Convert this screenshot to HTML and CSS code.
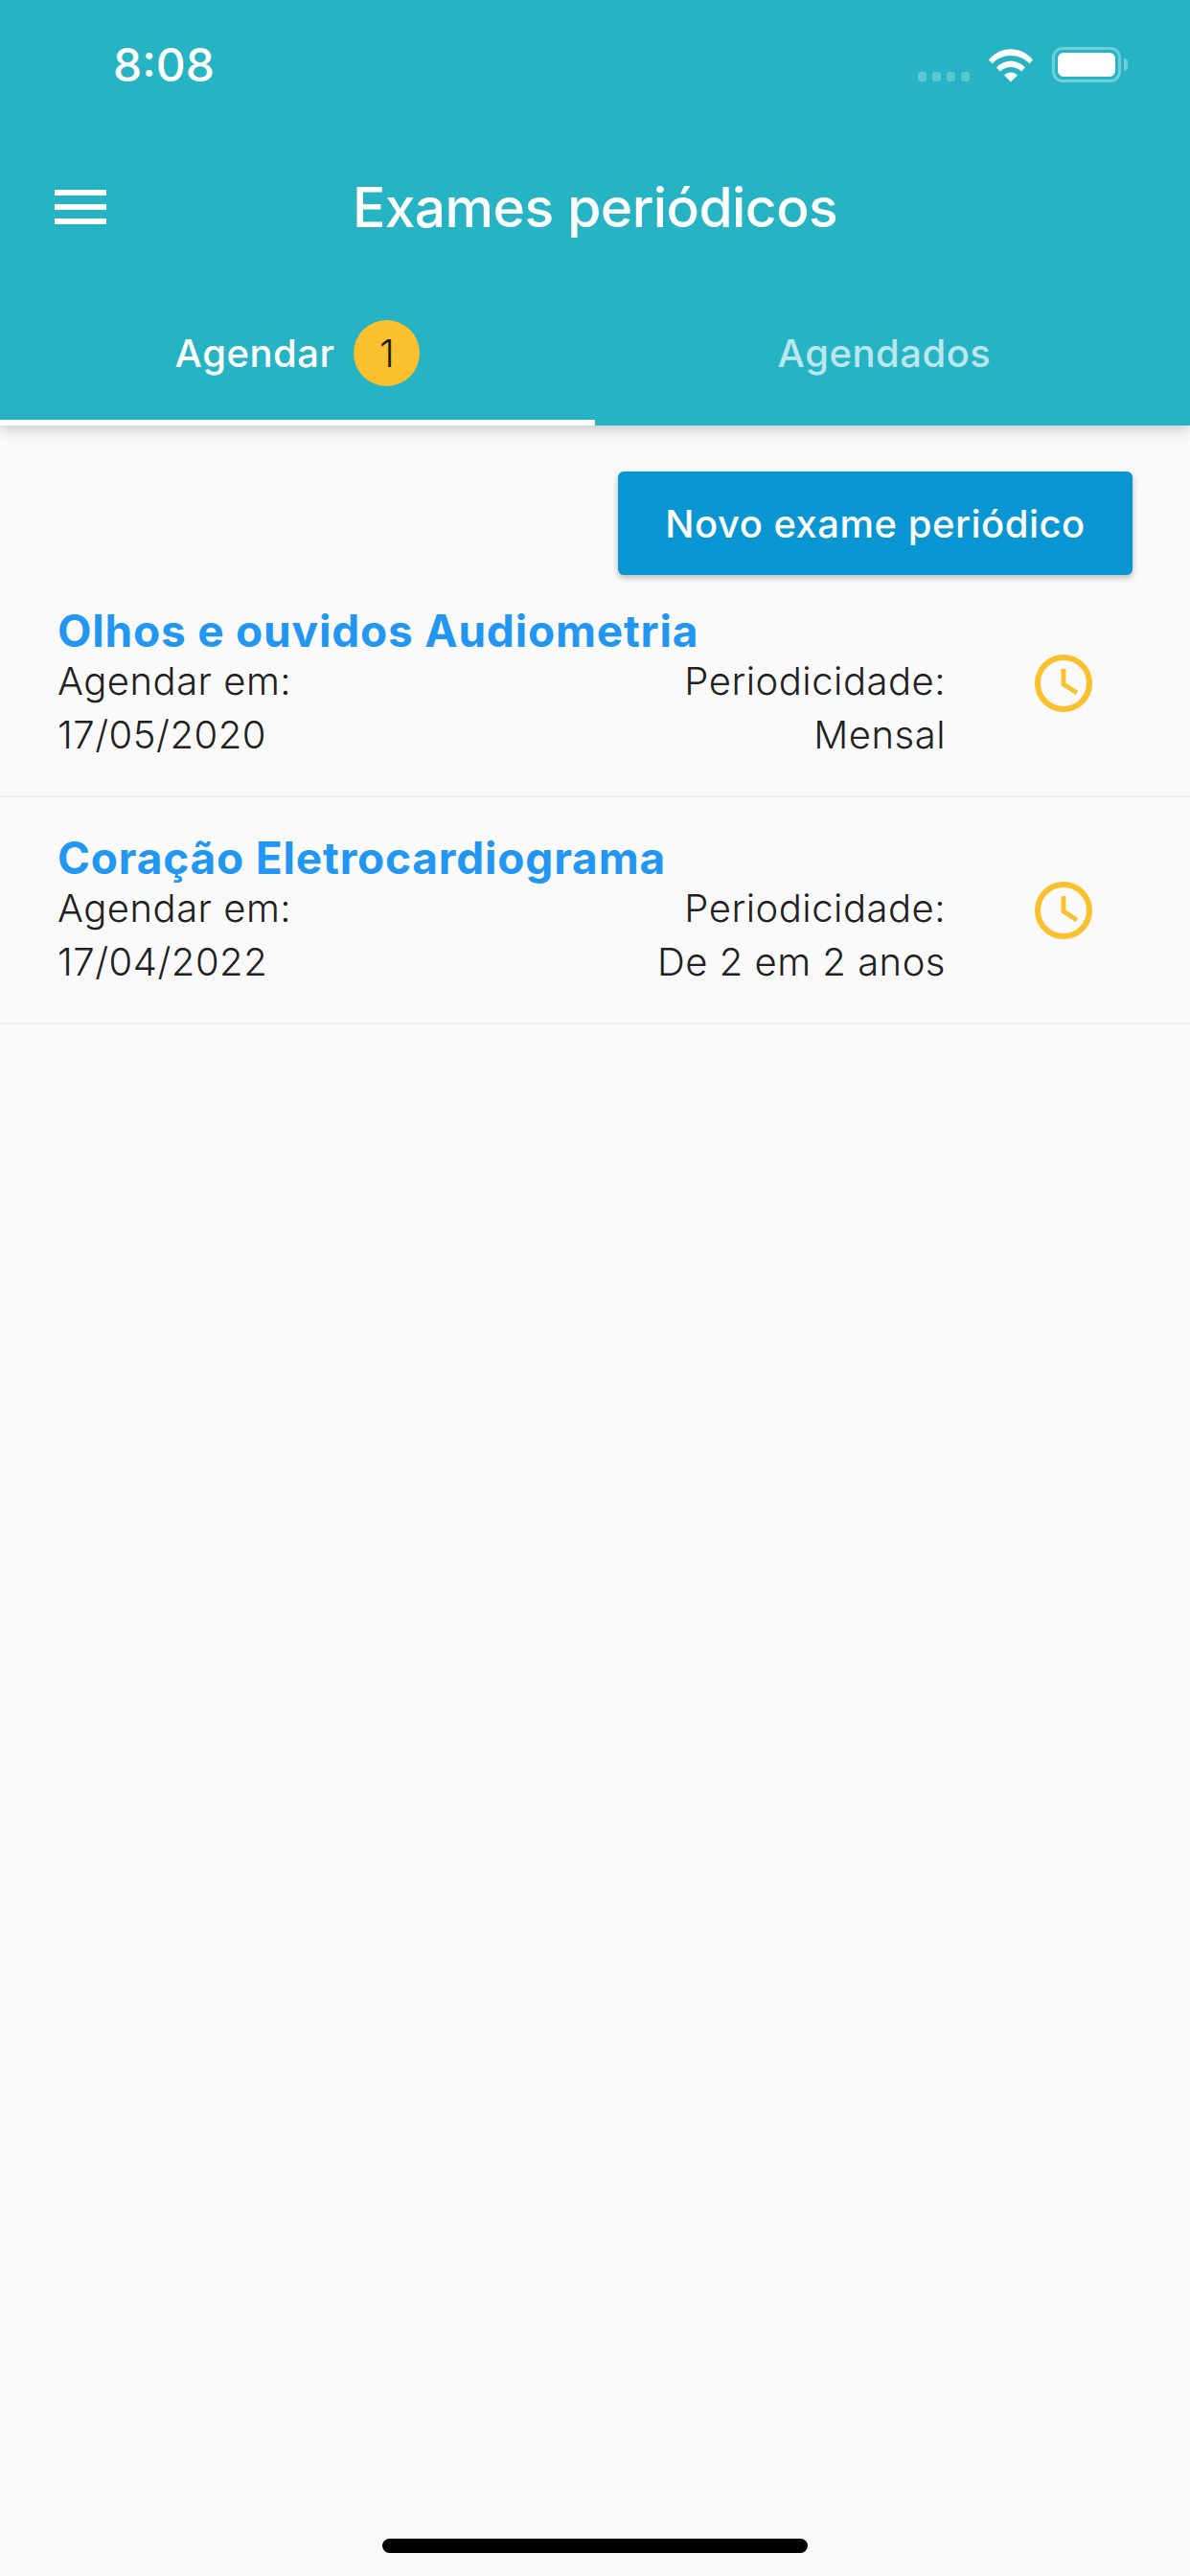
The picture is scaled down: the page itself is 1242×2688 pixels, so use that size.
FILE: index.html
```html
<!DOCTYPE html>
<html lang="pt">
<head>
    <meta charset="UTF-8">
    <meta name="viewport" content="width=device-width, initial-scale=1.0">
    <title>Exames periódicos</title>
    <link rel="stylesheet" href="styles.css">
</head>
<body>

    <header class="header">
        <div class="status">
            <span class="time">8:08</span>
            <div class="status-icons">
                <div class="signal"><i></i><i></i><i></i><i></i></div>
                <svg class="wifi" width="48" height="37" viewBox="0 0 48 37">
                    <path d="M1 13.500C13 -1.500 35 -1.500 47 13.500L43.500 17.500C33 6 15 6 4.500 17.500Z" fill="#fff"/>
                    <path d="M9 21.500C17 12.500 31 12.500 39 21.500L35 25.500C29 19.500 19 19.500 13 25.500Z" fill="#fff"/>
                    <path d="M17 29.500C21 25.500 27 25.500 31 29.500L24 36.500Z" fill="#fff"/>
                </svg>
                <div class="battery"><div class="battery-fill"></div></div>
                <div class="battery-nub"></div>
            </div>
        </div>

        <div class="toolbar">
            <div class="menu"><i></i><i></i><i></i></div>
            <h1>Exames periódicos</h1>
        </div>

        <div class="tabs">
            <div class="tab active">
                <span>Agendar</span>
                <span class="badge">1</span>
            </div>
            <div class="tab">
                <span>Agendados</span>
            </div>
        </div>
    </header>

    <main class="content">
        <div class="actions">
            <button class="new-exam">Novo exame periódico</button>
        </div>

        <div class="exam-list">
            <div class="exam">
                <div class="exam-title">Olhos e ouvidos Audiometria</div>
                <div class="exam-info">
                    <div class="exam-date">
                        <div>Agendar em:</div>
                        <div>17/05/2020</div>
                    </div>
                    <div class="exam-period">
                        <div>Periodicidade:</div>
                        <div>Mensal</div>
                    </div>
                    <svg class="clock" width="60" height="60" viewBox="0 0 60 60">
                        <circle cx="30" cy="30" r="27" fill="none" stroke="#fbc02d" stroke-width="6"/>
                        <path d="M30 15V31L44 40" fill="none" stroke="#fbc02d" stroke-width="5"/>
                    </svg>
                </div>
            </div>

            <div class="exam">
                <div class="exam-title">Coração Eletrocardiograma</div>
                <div class="exam-info">
                    <div class="exam-date">
                        <div>Agendar em:</div>
                        <div>17/04/2022</div>
                    </div>
                    <div class="exam-period">
                        <div>Periodicidade:</div>
                        <div>De 2 em 2 anos</div>
                    </div>
                    <svg class="clock" width="60" height="60" viewBox="0 0 60 60">
                        <circle cx="30" cy="30" r="27" fill="none" stroke="#fbc02d" stroke-width="6"/>
                        <path d="M30 15V31L44 40" fill="none" stroke="#fbc02d" stroke-width="5"/>
                    </svg>
                </div>
            </div>
        </div>
    </main>

    <div class="home-bar"></div>

</body>
</html>
```

FILE: styles.css
```css
* {
    box-sizing: border-box;
}
html, body {
    margin: 0;
    height: 2688px;
}
body {
    font-family: Inter, "Liberation Sans", sans-serif;
    background: #fafafa;
    display: flex;
    flex-direction: column;
    overflow: hidden;
}

/* header */
.header {
    background: #26b4c5;
    height: 444px;
    color: #fff;
    box-shadow: 0 4px 14px rgba(0, 0, 0, 0.2);
    position: relative;
}
.status {
    height: 136px;
    padding: 49px 65px 0 118px;
    display: flex;
    justify-content: space-between;
    align-items: flex-start;
}
.time {
    font-size: 48px;
    font-weight: 500;
    line-height: 37px;
}
.status-icons {
    display: flex;
    align-items: flex-end;
    height: 37px;
}
.signal {
    display: flex;
    gap: 6px;
    margin-right: 19px;
    margin-bottom: 1px;
}
.signal i {
    width: 9px;
    height: 10px;
    border-radius: 3px;
    background: rgba(255, 255, 255, 0.25);
}
.wifi {
    margin-right: 19px;
}
.battery {
    width: 72px;
    height: 37px;
    border: 3px solid rgba(255, 255, 255, 0.35);
    border-radius: 11px;
    padding: 3px;
}
.battery-fill {
    height: 100%;
    background: #fff;
    border-radius: 6px;
}
.battery-nub {
    width: 4px;
    height: 13px;
    margin: 0 0 12px 3px;
    background: rgba(255, 255, 255, 0.35);
    border-radius: 0 4px 4px 0;
}

.toolbar {
    height: 160px;
    display: flex;
    align-items: center;
    justify-content: center;
    position: relative;
}
.toolbar h1 {
    margin: 0;
    font-size: 57px;
    font-weight: 500;
    letter-spacing: -0.6px;
}
.menu {
    position: absolute;
    left: 57px;
    top: 62px;
    width: 54px;
    display: flex;
    flex-direction: column;
    gap: 9px;
}
.menu i {
    height: 6px;
    background: #fff;
}

.tabs {
    height: 148px;
    display: grid;
    grid-template-columns: 1fr 1fr;
}
.tab {
    display: flex;
    align-items: center;
    justify-content: center;
    gap: 20px;
    padding: 3px 17px 6px 0;
    font-size: 40px;
    font-weight: 500;
    letter-spacing: 0.5px;
    color: rgba(255, 255, 255, 0.7);
}
.tab.active {
    padding: 3px 0 0;
    color: #fff;
    border-bottom: 6px solid #fff;
}
.badge {
    width: 69px;
    height: 69px;
    border-radius: 50%;
    background: #fbc02d;
    color: #212121;
    font-weight: 300;
    letter-spacing: 0;
    display: flex;
    align-items: center;
    justify-content: center;
}

/* content */
.content {
    flex: 1;
}
.actions {
    display: flex;
    justify-content: flex-end;
    padding: 48px 60px 0 0;
}
.new-exam {
    width: 537px;
    height: 108px;
    border: none;
    border-radius: 6px;
    background: #0a96d3;
    color: #fff;
    font-family: inherit;
    font-size: 40px;
    font-weight: 500;
    letter-spacing: 0.5px;
    box-shadow: 0 3px 6px rgba(0, 0, 0, 0.25);
}
.exam-list {
    margin-top: -5px;
}
.exam {
    padding: 38px 102px 35px 60px;
    border-bottom: 2px solid #eeeeee;
}
.exam-title {
    color: #2196f3;
    font-size: 46px;
    font-weight: 700;
    line-height: 50px;
    letter-spacing: 0.8px;
}
.exam-info {
    display: flex;
    align-items: flex-start;
    font-size: 40px;
    font-weight: 300;
    letter-spacing: 0.5px;
    line-height: 56px;
    color: #212121;
}
.exam-date {
    flex: 1;
}
.exam-period {
    text-align: right;
    margin-right: 93px;
}

.home-bar {
    position: absolute;
    left: 399px;
    top: 2649px;
    width: 444px;
    height: 15px;
    border-radius: 8px;
    background: #000;
}
```
